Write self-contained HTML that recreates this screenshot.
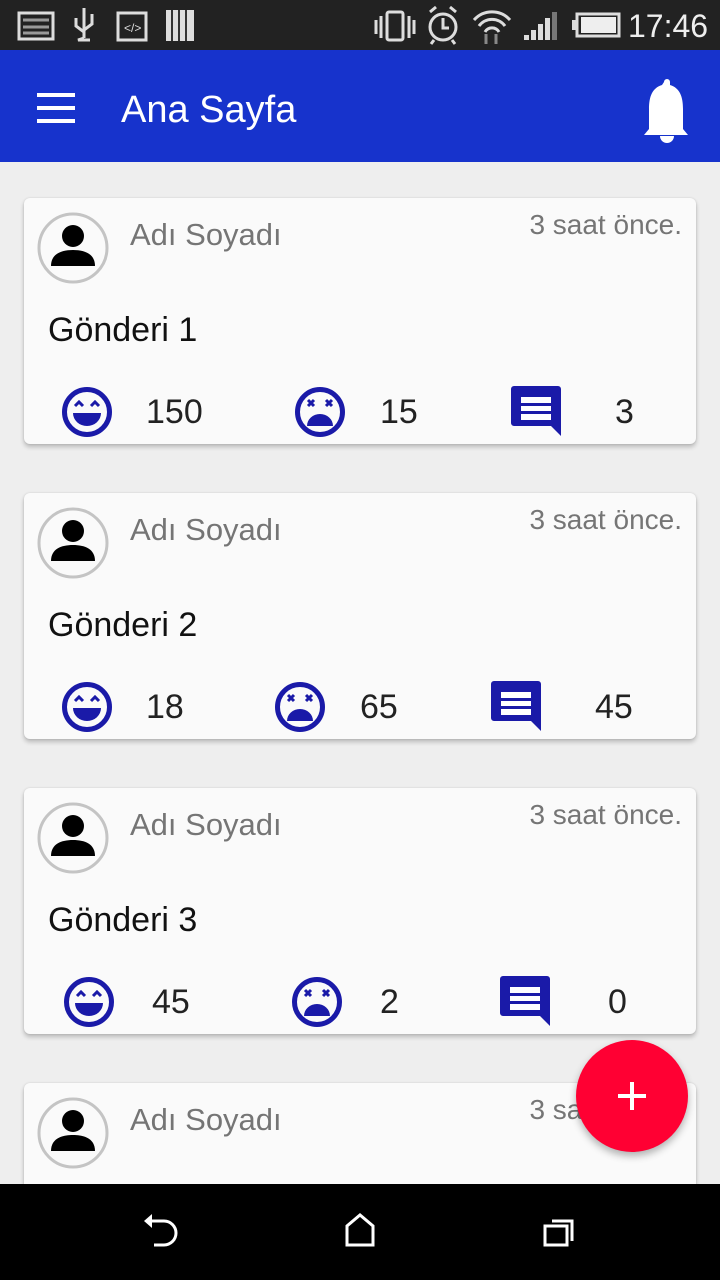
<!DOCTYPE html>
<html style="width:720px;height:1280px;overflow:hidden"><head><meta charset="utf-8"><style>
*{margin:0;padding:0;box-sizing:border-box}
body{width:720px;height:1280px;overflow:hidden;background:#eeeeee;font-family:"Liberation Sans",sans-serif;position:relative}
.abs{position:absolute}
.sb{left:0;top:0;width:720px;height:50px;background:#222}
.tb{left:0;top:50px;width:720px;height:112px;background:#1733cc}
.card{position:absolute;left:24px;width:672px;height:246px;background:#fafafa;border-radius:6px;box-shadow:0 3px 5px rgba(0,0,0,.22),0 0 2px rgba(0,0,0,.12)}
.name{position:absolute;left:106px;top:19px;font-size:31px;color:#757575}
.time{position:absolute;right:14px;top:11px;font-size:28px;color:#757575}
.post{position:absolute;left:24px;top:113px;font-size:34px;color:#111}
.num{position:absolute;top:195px;font-size:34px;color:#222}
.ic{position:absolute;top:189px}
.nav{left:0;top:1184px;width:720px;height:96px;background:#000}
</style></head><body>
<div class="abs sb"></div>
<svg class="abs" style="left:0;top:0" width="720" height="50">
<g fill="none" stroke="#ddd" stroke-width="3">
<rect x="19" y="13" width="34" height="26"/><rect x="118" y="13" width="28" height="27"/>
<rect x="387" y="12" width="16" height="28" rx="2"/>
<circle cx="443" cy="27" r="13"/>
<rect x="577" y="14" width="42" height="22"/>
</g>
<path d="M23 20h26M23 27h26M23 33h26" stroke="#999" stroke-width="3"/>
<path d="M84 8v30M84 38l-6 2h12M76 18v8l8 6M92 14v10l-8 6" stroke="#ddd" stroke-width="3" fill="none"/>
<text x="124" y="32" fill="#ddd" font-size="12" font-family="Liberation Sans">&lt;/&gt;</text>
<rect x="166" y="10" width="28" height="31" fill="#ddd"/><path d="M172 10v31M179 10v31M186 10v31" stroke="#333" stroke-width="2"/>
<path d="M376 20v14M381 16v22M409 16v22M414 20v14" stroke="#ddd" stroke-width="3"/>
<path d="M443 18v10h6M430 12l6-5M456 12l-6-5M434 40l-3 4M452 40l3 4" stroke="#ddd" stroke-width="3" fill="none"/>
<path d="M474 20a24 24 0 0 1 36 0M479 26a16 16 0 0 1 26 0M485 32a8 8 0 0 1 14 0" stroke="#ddd" stroke-width="3" fill="none"/>
<path d="M486 34v10M496 34v10" stroke="#888" stroke-width="3"/>
<path d="M524 40h5v-5h-5zM531 40h5v-10h-5zM538 40h5v-16h-5zM545 40h5v-22h-5z" fill="#ddd"/><rect x="552" y="12" width="5" height="28" fill="#777"/>
<rect x="572" y="20" width="5" height="10" fill="#ddd"/><rect x="581" y="17" width="35" height="16" fill="#eee"/>
<text x="628" y="37" fill="#eee" font-size="32" font-family="Liberation Sans">17:46</text>
</svg>
<div class="abs tb"></div>
<svg class="abs" style="left:0;top:50px" width="720" height="112">
<path d="M37 45h38M37 58h38M37 71h38" stroke="#fff" stroke-width="4"/>
<text x="121" y="72" fill="#fff" font-size="38" font-family="Liberation Sans">Ana Sayfa</text>
<path d="M664 32a3 3 0 0 1 6 0v3c10 3 13 12 13 24v20l5 6h-44l5-6v-20c0-12 3-21 13-24z" fill="#fff"/>
<path d="M660 86h14a7 7 0 0 1-14 0z" fill="#fff"/>
</svg>

<div class="card" style="top:198px">
<svg class="abs" style="left:12px;top:13px" width="74" height="74"><circle cx="37" cy="37" r="34" fill="#fafafa" stroke="#c4c4c4" stroke-width="3"/><circle cx="37" cy="25" r="11"/><path d="M15 55c0-12 10-16 22-16s22 4 22 16z"/></svg>
<div class="name">Adı Soyadı</div><div class="time">3 saat önce.</div>
<div class="post">Gönderi 1</div>
<svg class="ic" style="left:38px" width="50" height="50"><circle cx="25" cy="25" r="22.5" fill="none" stroke="#1a1aa8" stroke-width="5"/><path d="M13 19l4-4 4 4M29 19l4-4 4 4" stroke="#1a1aa8" stroke-width="3" fill="none"/><path d="M11 26h28a14 13 0 0 1-28 0z" fill="#1a1aa8"/></svg>
<div class="num" style="left:122px">150</div>
<svg class="ic" style="left:271px" width="50" height="50"><circle cx="25" cy="25" r="22.5" fill="none" stroke="#1a1aa8" stroke-width="5"/><path d="M13 13l6 6M19 13l-6 6M31 13l6 6M37 13l-6 6" stroke="#1a1aa8" stroke-width="3"/><path d="M12 39a13 12 0 0 1 26 0z" fill="#1a1aa8"/></svg>
<div class="num" style="left:356px">15</div>
<svg class="ic" style="left:487px;top:188px" width="52" height="52"><path d="M3 0h44a3 3 0 0 1 3 3v31v16l-10-10h-37a3 3 0 0 1-3-3v-34a3 3 0 0 1 3-3z" fill="#1a1aa8"/><path d="M10 11h30v6h-30zM10 20h30v5h-30zM10 28h30v6h-30z" fill="#fff"/></svg>
<div class="num" style="left:591px">3</div>
</div>

<div class="card" style="top:493px">
<svg class="abs" style="left:12px;top:13px" width="74" height="74"><circle cx="37" cy="37" r="34" fill="#fafafa" stroke="#c4c4c4" stroke-width="3"/><circle cx="37" cy="25" r="11"/><path d="M15 55c0-12 10-16 22-16s22 4 22 16z"/></svg>
<div class="name">Adı Soyadı</div><div class="time">3 saat önce.</div>
<div class="post">Gönderi 2</div>
<svg class="ic" style="left:38px" width="50" height="50"><circle cx="25" cy="25" r="22.5" fill="none" stroke="#1a1aa8" stroke-width="5"/><path d="M13 19l4-4 4 4M29 19l4-4 4 4" stroke="#1a1aa8" stroke-width="3" fill="none"/><path d="M11 26h28a14 13 0 0 1-28 0z" fill="#1a1aa8"/></svg>
<div class="num" style="left:122px">18</div>
<svg class="ic" style="left:251px" width="50" height="50"><circle cx="25" cy="25" r="22.5" fill="none" stroke="#1a1aa8" stroke-width="5"/><path d="M13 13l6 6M19 13l-6 6M31 13l6 6M37 13l-6 6" stroke="#1a1aa8" stroke-width="3"/><path d="M12 39a13 12 0 0 1 26 0z" fill="#1a1aa8"/></svg>
<div class="num" style="left:336px">65</div>
<svg class="ic" style="left:467px;top:188px" width="52" height="52"><path d="M3 0h44a3 3 0 0 1 3 3v31v16l-10-10h-37a3 3 0 0 1-3-3v-34a3 3 0 0 1 3-3z" fill="#1a1aa8"/><path d="M10 11h30v6h-30zM10 20h30v5h-30zM10 28h30v6h-30z" fill="#fff"/></svg>
<div class="num" style="left:571px">45</div>
</div>

<div class="card" style="top:788px">
<svg class="abs" style="left:12px;top:13px" width="74" height="74"><circle cx="37" cy="37" r="34" fill="#fafafa" stroke="#c4c4c4" stroke-width="3"/><circle cx="37" cy="25" r="11"/><path d="M15 55c0-12 10-16 22-16s22 4 22 16z"/></svg>
<div class="name">Adı Soyadı</div><div class="time">3 saat önce.</div>
<div class="post">Gönderi 3</div>
<svg class="ic" style="left:40px" width="50" height="50"><circle cx="25" cy="25" r="22.5" fill="none" stroke="#1a1aa8" stroke-width="5"/><path d="M13 19l4-4 4 4M29 19l4-4 4 4" stroke="#1a1aa8" stroke-width="3" fill="none"/><path d="M11 26h28a14 13 0 0 1-28 0z" fill="#1a1aa8"/></svg>
<div class="num" style="left:128px">45</div>
<svg class="ic" style="left:268px" width="50" height="50"><circle cx="25" cy="25" r="22.5" fill="none" stroke="#1a1aa8" stroke-width="5"/><path d="M13 13l6 6M19 13l-6 6M31 13l6 6M37 13l-6 6" stroke="#1a1aa8" stroke-width="3"/><path d="M12 39a13 12 0 0 1 26 0z" fill="#1a1aa8"/></svg>
<div class="num" style="left:356px">2</div>
<svg class="ic" style="left:476px;top:188px" width="52" height="52"><path d="M3 0h44a3 3 0 0 1 3 3v31v16l-10-10h-37a3 3 0 0 1-3-3v-34a3 3 0 0 1 3-3z" fill="#1a1aa8"/><path d="M10 11h30v6h-30zM10 20h30v5h-30zM10 28h30v6h-30z" fill="#fff"/></svg>
<div class="num" style="left:584px">0</div>
</div>

<div class="card" style="top:1083px;height:110px">
<svg class="abs" style="left:12px;top:13px" width="74" height="74"><circle cx="37" cy="37" r="34" fill="#fafafa" stroke="#c4c4c4" stroke-width="3"/><circle cx="37" cy="25" r="11"/><path d="M15 55c0-12 10-16 22-16s22 4 22 16z"/></svg>
<div class="name">Adı Soyadı</div><div class="time">3 saat önce.</div>
</div>

<div class="abs" style="left:576px;top:1040px;width:112px;height:112px;border-radius:50%;background:#ff0033;box-shadow:0 4px 8px rgba(0,0,0,.3)"></div>
<svg class="abs" style="left:576px;top:1040px" width="112" height="112"><path d="M56 42v28M42 56h28" stroke="#fff" stroke-width="4"/></svg>

<div class="abs nav"></div>
<svg class="abs" style="left:0;top:1184px" width="720" height="96">
<path d="M150 37h14a12 12 0 0 1 0 24h-10" stroke="#fff" stroke-width="3" fill="none"/><path d="M144 37l8-7v14z" fill="#fff"/>
<path d="M347 61v-19l13-11 13 11v19z" stroke="#fff" stroke-width="3" fill="none"/>
<rect x="545" y="42" width="22" height="19" stroke="#fff" stroke-width="3" fill="none"/><path d="M552 37h20v20" stroke="#fff" stroke-width="3" fill="none"/>
</svg>
</body></html>
